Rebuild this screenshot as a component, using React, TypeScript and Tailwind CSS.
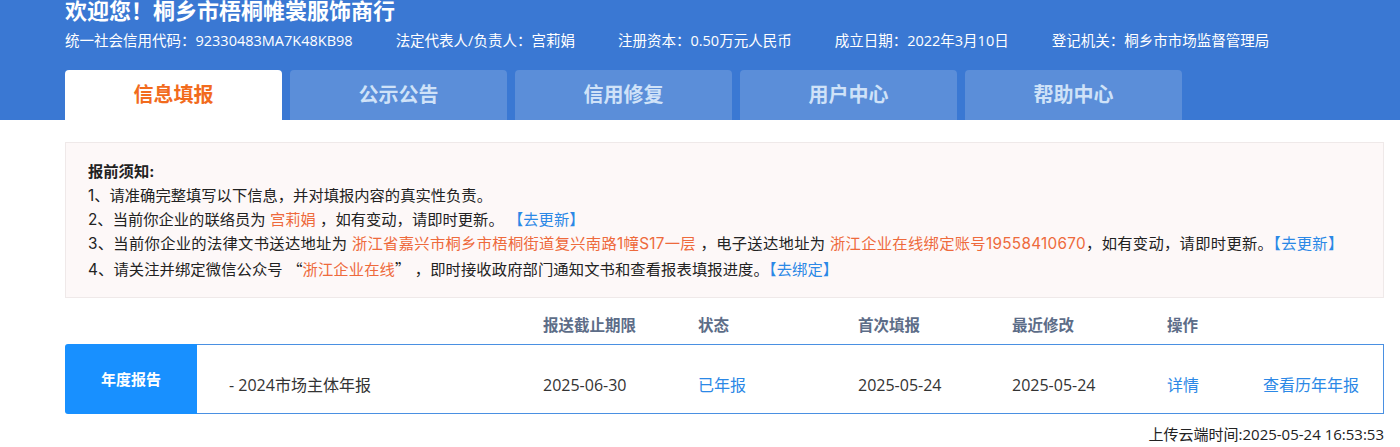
import React from 'react';

const tabs = ['信息填报', '公示公告', '信用修复', '用户中心', '帮助中心'];

const info = [
  '统一社会信用代码：92330483MA7K48KB98',
  '法定代表人/负责人：宫莉娟',
  '注册资本：0.50万元人民币',
  '成立日期：2022年3月10日',
  '登记机关：桐乡市市场监督管理局',
];

// column widths after the first (description) column
const cols = [
  { label: '报送截止期限', w: 'w-[155px]' },
  { label: '状态', w: 'w-[160px]' },
  { label: '首次填报', w: 'w-[154px]' },
  { label: '最近修改', w: 'w-[155px]' },
  { label: '操作', w: 'w-[96px]' },
];

const Orange: React.FC<{ children: React.ReactNode }> = ({ children }) => (
  <span className="text-[#ee6a3c]">{children}</span>
);

const Link: React.FC<{ children: React.ReactNode }> = ({ children }) => (
  <span className="text-[#2b88e6] cursor-pointer">{children}</span>
);

// full-width chinese quote marks
const Q: React.FC<{ children: React.ReactNode }> = ({ children }) => (
  <span className="font-['Noto_Sans_CJK_SC',sans-serif]">{children}</span>
);

export default function App() {
  return (
    <div className="w-[1400px] h-[447px] overflow-hidden bg-white font-['Open_Sans','Noto_Sans_CJK_SC',sans-serif] text-[#333]">
      {/* header */}
      <div className="bg-[#3a78d3] px-[65px]">
        <h1 className="-mt-[1px] h-[22px] leading-[22px] text-[22px] font-bold text-white">
          欢迎您！桐乡市梧桐帷裳服饰商行
        </h1>
        <div className="mt-[10px] flex gap-[43px] text-[14.5px] leading-[20px] text-white">
          {info.map((t) => (
            <span key={t}>{t}</span>
          ))}
        </div>
        <div className="mt-[19px] flex gap-[8px]">
          {tabs.map((t, i) => (
            <div
              key={t}
              className={
                i === 0
                  ? 'w-[217px] h-[50px] rounded-t-[4px] bg-white flex items-center justify-center text-[20px] font-bold text-[#f26b1d]'
                  : 'w-[217px] h-[50px] rounded-t-[4px] bg-[#5b8ed9] flex items-center justify-center text-[20px] font-bold text-[#cfe2f8]'
              }
            >
              {t}
            </div>
          ))}
        </div>
      </div>

      <div className="ml-[65px] w-[1319px]">
        {/* notice */}
        <div className="mt-[22px] border border-[#efe9e9] bg-[#fdf8f8] pl-[22px] pt-[17px] pb-[15px] font-['Inter','Noto_Sans_CJK_SC',sans-serif] text-[15.3px] leading-[24px] text-[#222]">
          <div className="font-bold">报前须知:</div>
          <div>1、请准确完整填写以下信息，并对填报内容的真实性负责。</div>
          <div>
            2、当前你企业的联络员为 <Orange>宫莉娟</Orange> ，如有变动，请即时更新。 <Link>【去更新】</Link>
          </div>
          <div className="tracking-[0.3px]">
            3、当前你企业的法律文书送达地址为 <Orange>浙江省嘉兴市桐乡市梧桐街道复兴南路1幢S17一层</Orange> ，电子送达地址为{' '}
            <Orange>浙江企业在线绑定账号19558410670</Orange>，如有变动，请即时更新。<Link>【去更新】</Link>
          </div>
          <div className="tracking-[0.1px]">
            4、请关注并绑定微信公众号 <Q>“</Q>
            <Orange>浙江企业在线</Orange>
            <Q>”</Q> ，即时接收政府部门通知文书和查看报表填报进度。<Link>【去绑定】</Link>
          </div>
        </div>

        {/* table header */}
        <div className="mt-[10px] h-[36px] flex items-center text-[15.5px] font-semibold text-[#5d6d88]">
          <div className="w-[478px]" />
          {cols.map((c) => (
            <div key={c.label} className={c.w}>
              {c.label}
            </div>
          ))}
        </div>

        {/* row */}
        <div className="flex h-[70px]">
          <div className="w-[132px] rounded-l-[3px] bg-[#1890ff] flex items-center justify-center text-[15px] font-bold text-white">
            年度报告
          </div>
          <div className="flex-1 flex items-center pt-[12px] border-y border-r border-[#4a90e2] text-[16px]">
            <div className="w-[346px] pl-[32px] text-[#333]">- 2024市场主体年报</div>
            <div className="w-[155px] text-[#333]">2025-06-30</div>
            <div className="w-[160px] text-[#2b88e6]">已年报</div>
            <div className="w-[154px] text-[#333]">2025-05-24</div>
            <div className="w-[155px] text-[#333]">2025-05-24</div>
            <div className="w-[96px] text-[#2b88e6]">详情</div>
            <div className="text-[#2b88e6]">查看历年年报</div>
          </div>
        </div>

        <div className="mt-[10px] text-right text-[15px] leading-[20px] text-[#222]">
          上传云端时间:2025-05-24 16:53:53
        </div>
      </div>
    </div>
  );
}
